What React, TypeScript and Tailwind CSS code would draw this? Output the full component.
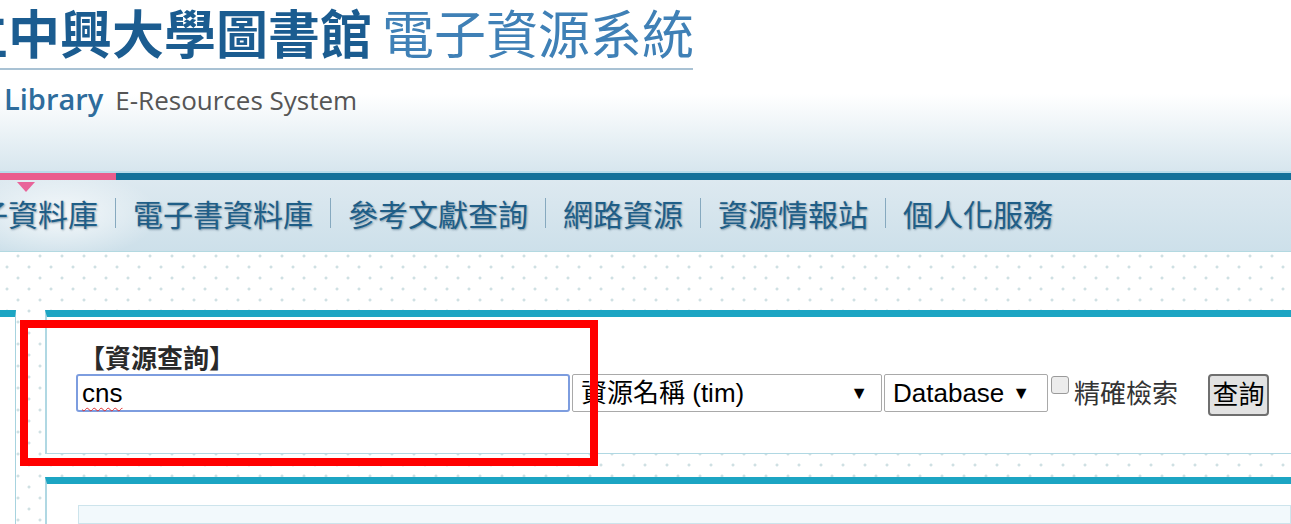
import React from "react";

const cjk = "font-['Noto_Sans_CJK_TC','Noto_Sans',sans-serif]";
const form = "font-['Liberation_Sans','Noto_Sans_CJK_TC',sans-serif]";

const menu = ["電子資料庫", "電子書資料庫", "參考文獻查詢", "網路資源", "資源情報站", "個人化服務"];

function Header() {
  return (
    <div className="h-[171px] bg-linear-to-b from-white from-55% to-[#d7e6ee] overflow-hidden">
      <div className={`${cjk} flex items-end ml-[-96px] pt-[6px] text-[52px] leading-none whitespace-nowrap`}>
        <span className="font-bold text-[#1b5c90]">國立中興大學圖書館</span>
        <span className="ml-[10px] font-normal text-[#3f80b6]">電子資源系統</span>
      </div>
      <div className="h-[2px] w-[693px] bg-[#a9c2d4] mt-[10px]" />
      <div className="ml-[4px] mt-[7px] flex items-baseline gap-[12px] font-['Open_Sans',sans-serif] whitespace-nowrap">
        <span className="text-[29px] font-semibold text-[#2e6c9c]">Library</span>
        <span className="text-[26px] text-[#555]">E-Resources System</span>
      </div>
    </div>
  );
}

function Nav() {
  return (
    <div className="relative">
      <div className="h-[2px] bg-[#b9dcea]" />
      <div className="flex h-[7px]">
        <div className="w-[116px] bg-[#ea5d8d]" />
        <div className="flex-1 bg-[#13719a]" />
      </div>
      <div className="h-[71px] bg-linear-to-b from-[#dde9f0] to-[#cde0ea] relative overflow-hidden">
        <div className="absolute left-[-40px] top-[-10px] w-[200px] h-[90px] bg-[radial-gradient(ellipse_at_center,rgba(255,255,255,0.75),rgba(255,255,255,0)_70%)]" />
        <div className="absolute left-[17px] top-[2px] w-0 h-0 border-l-[9px] border-r-[9px] border-t-[10px] border-l-transparent border-r-transparent border-t-[#e8649a]" />
        <div className={`${cjk} relative flex items-center h-full pb-[5px] ml-[-52px] text-[30px] leading-none font-normal text-[#1f5e87] [text-shadow:1px_1px_2px_rgba(0,40,70,0.4)] whitespace-nowrap`}>
          {menu.map((m, i) => (
            <React.Fragment key={m}>
              {i > 0 && <div className="w-[1px] h-[30px] mx-[17px] bg-[#86a9bf]" />}
              <span>{m}</span>
            </React.Fragment>
          ))}
        </div>
      </div>
      <div className="h-[1px] bg-[#b3d9e1]" />
    </div>
  );
}

function SearchForm() {
  return (
    <div className={`${form} pl-[29px] pt-[27px]`}>
      <div className={`${cjk} ml-[3px] text-[26px] leading-none font-bold text-[#2a2a2a]`}>【資源查詢】</div>
      <div className="flex items-start mt-[4px] text-[26px] leading-none text-black">
        <div className="w-[494px] h-[38px] border-2 border-[#7d9ddf] rounded-[3px] flex items-center pl-[4px] bg-white">
          <span className="underline decoration-wavy decoration-[#e03030] decoration-1 underline-offset-[5px]">cns</span>
        </div>
        <div className="ml-[2px] w-[310px] h-[38px] border border-[#a9a9a9] rounded-[2px] flex items-center pl-[8px] pr-[13px] bg-white">
          <span>資源名稱 (tim)</span>
          <span className="ml-auto text-[18px]">▼</span>
        </div>
        <div className="ml-[2px] w-[164px] h-[38px] border border-[#a9a9a9] rounded-[2px] flex items-center pl-[8px] bg-white">
          <span>Database</span>
          <span className="ml-[8px] text-[18px]">▼</span>
        </div>
        <div className="ml-[3px] mt-[2px] w-[18px] h-[18px] border border-[#9a9a9a] rounded-[3px] bg-[#ececec]" />
        <span className="ml-[5px] mt-[7px] text-[#333]">精確檢索</span>
        <div className="ml-[30px] w-[61px] h-[42px] border-2 border-[#6f6f6f] rounded-[4px] bg-[#e2e2e2] flex items-center justify-center">
          查詢
        </div>
      </div>
    </div>
  );
}

export default function App() {
  return (
    <div className="w-[1291px] h-[524px] overflow-hidden relative bg-white">
      <Header />
      <Nav />
      <div className="h-[272px] bg-white bg-[radial-gradient(circle,#cfe0e3_1.2px,transparent_1.8px),radial-gradient(circle,#cfe0e3_1.2px,transparent_1.8px)] bg-[length:22px_22px] bg-[position:7px_-7px,18px_4px]">
        <div className="h-[58px]" />
        <div className="flex h-[214px]">
          <div className="w-[16px] h-full bg-white border-t-[7px] border-t-[#1ca5c3] border-r border-r-[#a7d3df]" />
          <div className="w-[29px]" />
          <div className="flex-1 flex flex-col">
            <div className="h-[144px] bg-white border-t-[7px] border-t-[#1ca5c3] border-l-2 border-l-[#b0d8e3] border-b border-b-[#b0d8e3]">
              <SearchForm />
            </div>
            <div className="h-[23px]" />
            <div className="flex-1 bg-white border-t-[7px] border-t-[#1ca5c3] border-l-2 border-l-[#b0d8e3] pl-[31px] pt-[21px]">
              <div className="h-full bg-[#f2f9fc] border border-[#cde4ec]" />
            </div>
          </div>
        </div>
      </div>
      <div className="absolute left-[20px] top-[320px] w-[578px] h-[146px] border-[8px] border-[#ff0000]" />
    </div>
  );
}
